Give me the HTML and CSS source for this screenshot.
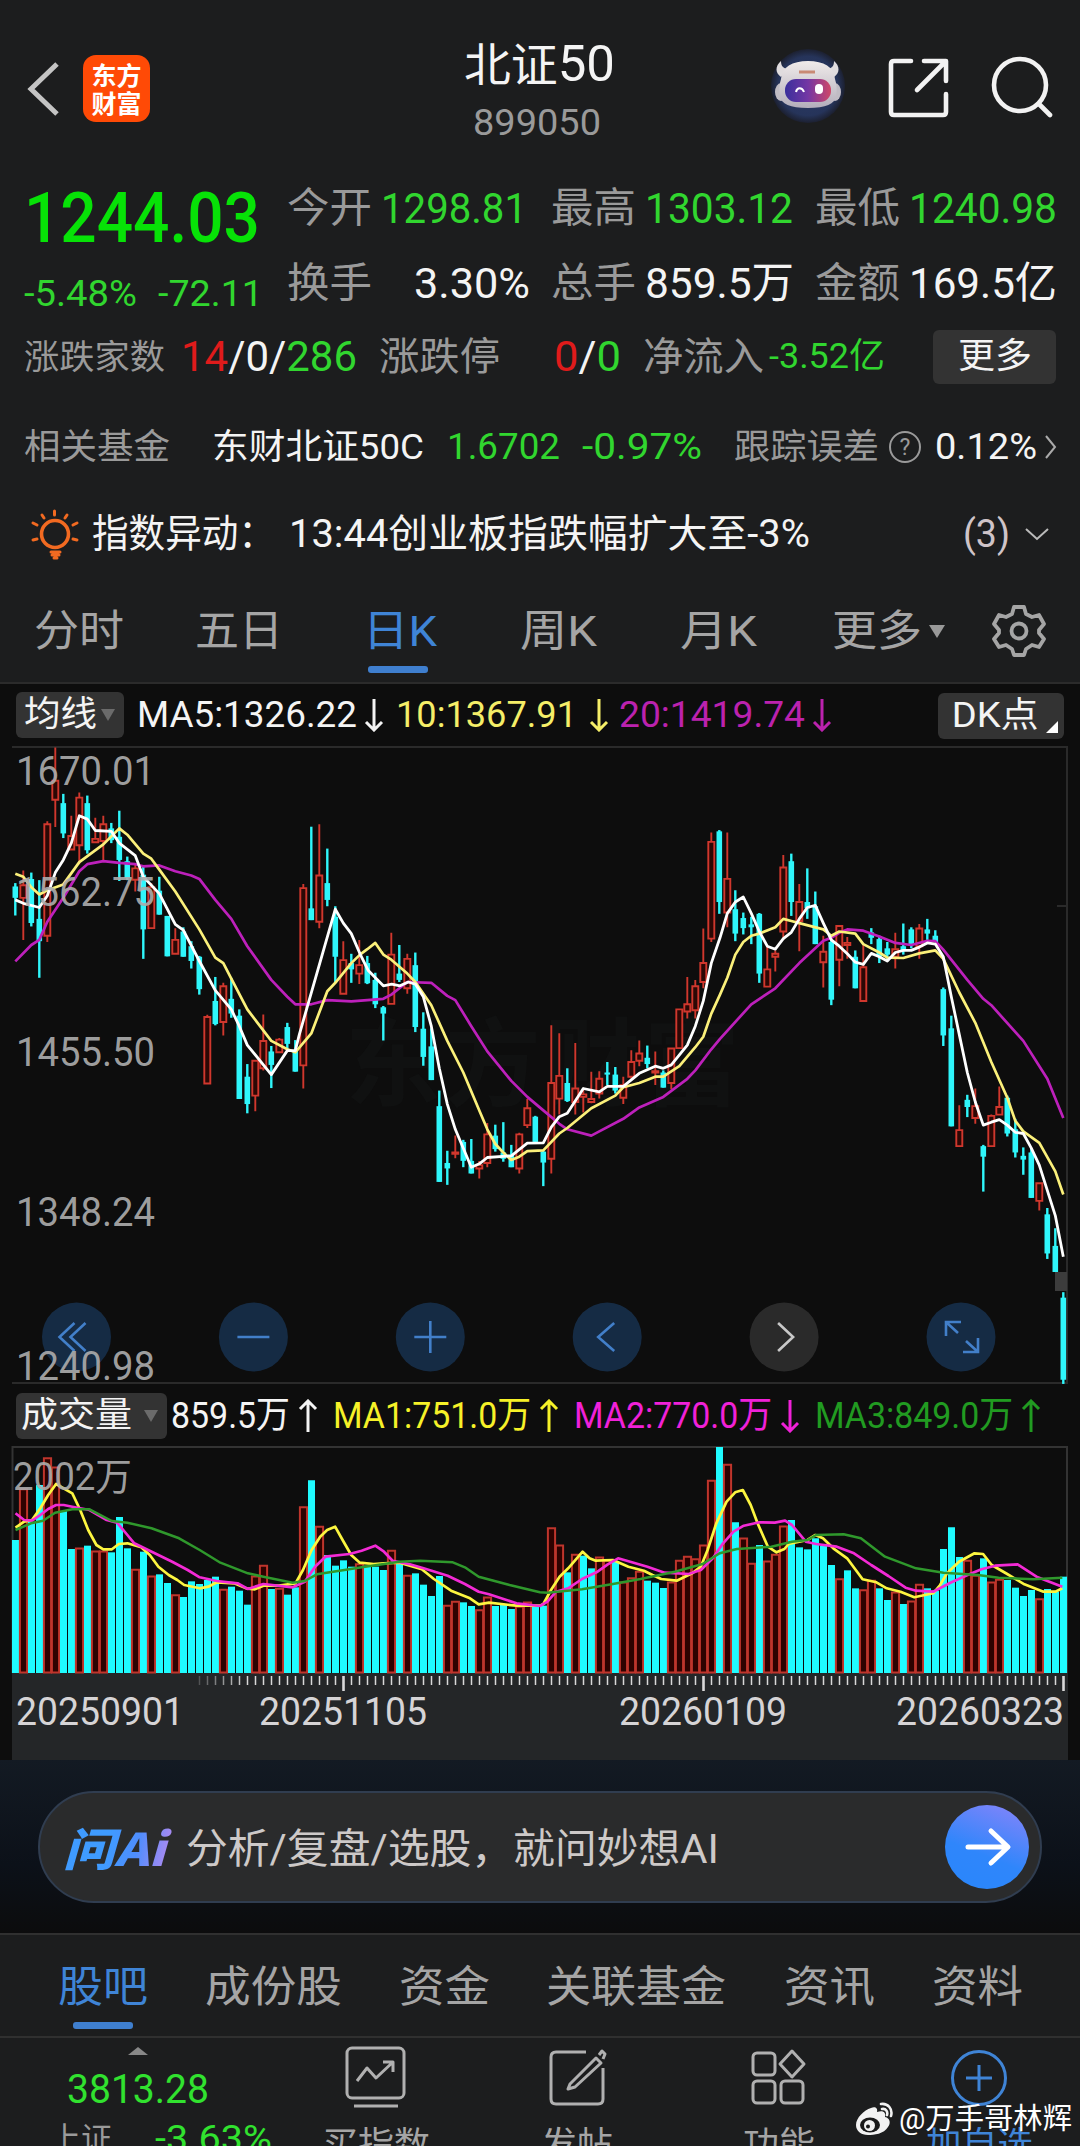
FILE: index.html
```html
<!DOCTYPE html>
<html lang="zh-CN">
<head>
<meta charset="utf-8">
<title>北证50 899050</title>
<link rel="stylesheet" href="styles.css">
</head>
<body>
<header class="top">
  <svg class="back" width="40" height="60" viewBox="0 0 40 60"><path d="M36 6 10 31l26 25"/></svg>
  <div class="brand"><span>东方</span><span>财富</span></div>
  <div class="title"><h1><span data-w="147">北证<i>50</i></span></h1><p><span data-w="124">899050</span></p></div>
  <svg class="robot" width="80" height="84" viewBox="0 0 80 84">
    <defs><linearGradient id="visor"><stop offset="0" stop-color="#3a2f9c"/><stop offset=".5" stop-color="#7437a4"/><stop offset="1" stop-color="#cf4868"/></linearGradient>
    <radialGradient id="halo"><stop offset="0" stop-color="#2b3a66"/><stop offset=".8" stop-color="#26345a"/><stop offset="1" stop-color="#1c2030"/></radialGradient>
    <linearGradient id="shell" x2="0" y2="1"><stop offset="0" stop-color="#f0ebea"/><stop offset="1" stop-color="#b3aebb"/></linearGradient></defs>
    <circle cx="40" cy="41" r="37" fill="url(#halo)"/>
    <path d="M13 16c-6 5-6 12 0 16l6-8c-4-1-6-3-6-8zM66 16c6 5 6 12 0 16l-6-8c4-1 6-3 6-8z" fill="#e0dcde"/>
    <ellipse cx="13" cy="47" rx="6" ry="9" fill="#c0bcc4"/><ellipse cx="67" cy="47" rx="6" ry="9" fill="#c0bcc4"/>
    <path d="M13 34c1-12 11-18 27-18s26 6 27 18c2 6 2 12 1 17-1 8-10 12-28 12s-27-4-28-12c-1-5-1-11 1-17z" fill="url(#shell)"/>
    <rect x="17" y="34" width="46" height="23" rx="11" fill="url(#visor)"/>
    <path d="M28 47c1-5 6-5 8 0" fill="none" stroke="#fff" stroke-width="2"/><rect x="47" y="39" width="8" height="10" rx="4" fill="#fff"/>
    <path d="M31 27h16" stroke="#c98a75" stroke-width="3"/>
  </svg>
  <svg class="line" width="62" height="62" viewBox="0 0 62 62"><path d="M24 5H7q-3 0-3 3v48q0 3 3 3h49q3 0 3-3V38M37 5h22v20M58 6 30 34"/></svg>
  <svg class="line" width="62" height="62" viewBox="0 0 62 62"><circle cx="29" cy="29" r="26"/><path d="m48 48 11 11"/></svg>
</header>

<section class="quote">
  <div class="price">
    <b><span data-w="232">1244.03</span></b>
    <div class="chg"><span data-w="109">-5.48%</span><span data-w="101">-72.11</span></div>
  </div>
  <div class="stats">
    <em data-w="81">今开</em><span class="g" data-w="142">1298.81</span><em data-w="81">最高</em><span class="g" data-w="144">1303.12</span><em data-w="81">最低</em><span class="g" data-w="144">1240.98</span>
    <em data-w="81">换手</em><span class="end" data-w="112">3.30%</span><em data-w="81">总手</em><span data-w="145">859.5万</span><em data-w="81">金额</em><span data-w="144">169.5亿</span>
  </div>
</section>
<section class="breadth">
  <em data-w="137">涨跌家数</em><span class="n" data-w="172"><i class="r">14</i>/0/<i class="g">286</i></span><em class="l" data-w="117">涨跌停</em><span class="n" data-w="63"><i class="r">0</i>/<i class="g">0</i></span><em class="l" data-w="117">净流入</em><span class="g s" data-w="112">-3.52亿</span>
  <button class="more"><span data-w="70">更多</span></button>
</section>
<section class="fund">
  <em data-w="142">相关基金</em><span data-w="208">东财北证50C</span><span class="g" data-w="109">1.6702</span><span class="g" data-w="116">-0.97%</span><em data-w="141">跟踪误差</em>
  <svg width="34" height="34" viewBox="0 0 34 34"><circle cx="17" cy="17" r="15" fill="none" stroke="#9a9a9a" stroke-width="2"/><text x="17" y="25" text-anchor="middle">?</text></svg>
  <span data-w="98">0.12%</span>
  <svg width="14" height="26" viewBox="0 0 14 26"><path d="m1 2 9 11-9 11" fill="none" stroke="#aaa" stroke-width="2"/></svg>
</section>
<section class="alert">
  <svg width="50" height="52" viewBox="0 0 50 52"><g fill="none" stroke="#f26a21" stroke-width="3" stroke-linecap="round"><circle cx="25" cy="26" r="13.5" stroke-width="3.6"/><path d="M24.500 3v4M12 7l2 3M37 7l-2 3M3 15l4 2M47 15l-4 2M3 32l4-1M47 32l-4-1M21 44h9M22 47h7M24 50h3"/></g></svg>
  <span data-w="179">指数异动：</span><span data-w="517">13:44创业板指跌幅扩大至-3%</span><span class="cnt" data-w="43">(3)</span>
  <svg width="26" height="16" viewBox="0 0 26 16"><path d="m1 3 11 10L23 3" fill="none" stroke="#bbb" stroke-width="2"/></svg>
</section>
<nav class="period">
  <span data-w="86">分时</span><span data-w="84">五日</span><span class="on"><span data-w="70">日K</span></span><span data-w="73">周K</span><span data-w="73">月K</span><span data-w="86">更多</span>
  <svg class="tri" width="16" height="13" viewBox="0 0 16 13"><path d="M0 0h16L8 13z" fill="#999"/></svg>
  <svg width="54" height="54" viewBox="0 0 54 54"><g fill="none" stroke="#a5a5a5" stroke-width="3.800" stroke-linejoin="round"><path d="M22 3h10l2 7 6 3 7-2 5 9-5 6v3l5 6-5 8-7-2-6 4-2 6H22l-2-6-6-4-7 2-5-8 5-6v-3l-5-6 5-9 7 2 6-3z"/><circle cx="27" cy="27" r="7.500"/></g></svg>
</nav>

<main class="chart">
  <div class="ma">
    <button><span data-w="69">均线</span><svg width="14" height="12" viewBox="0 0 14 12"><path d="M0 0h14L7 12z" fill="#6b6b6b"/></svg></button>
    <span data-w="216">MA5:1326.22</span><svg class="arr" viewBox="0 0 20 34"><path d="M10 1v31M2 24l8 8 8-8"/></svg>
    <span class="y" data-w="177">10:1367.91</span><svg class="arr y" viewBox="0 0 20 34"><path d="M10 1v31M2 24l8 8 8-8"/></svg>
    <span class="m" data-w="182">20:1419.74</span><svg class="arr m" viewBox="0 0 20 34"><path d="M10 1v31M2 24l8 8 8-8"/></svg>
    <button class="dk"><span data-w="83">DK点</span><svg width="12" height="12" viewBox="0 0 12 12"><path d="M12 0v12H0z" fill="#fff"/></svg></button>
  </div>
  <svg id="kline" width="1080" height="645" viewBox="0 740 1080 645"></svg>
  <div class="ma vol">
    <button><span data-w="107">成交量</span><svg width="14" height="12" viewBox="0 0 14 12"><path d="M0 0h14L7 12z" fill="#6b6b6b"/></svg></button>
    <span data-w="115">859.5万</span><svg class="arr" viewBox="0 0 20 34"><path d="M10 33V2M2 10l8-8 8 8"/></svg>
    <span class="yy" data-w="194">MA1:751.0万</span><svg class="arr yy" viewBox="0 0 20 34"><path d="M10 33V2M2 10l8-8 8 8"/></svg>
    <span class="mm" data-w="194">MA2:770.0万</span><svg class="arr mm" viewBox="0 0 20 34"><path d="M10 1v31M2 24l8 8 8-8"/></svg>
    <span class="gg" data-w="194">MA3:849.0万</span><svg class="arr gg" viewBox="0 0 20 34"><path d="M10 33V2M2 10l8-8 8 8"/></svg>
  </div>
  <svg id="volume" width="1080" height="315" viewBox="0 1445 1080 315"></svg>
</main>

<section class="ai">
  <div class="pill">
    <b><span data-w="98">问Ai</span></b><span data-w="529">分析/复盘/选股，就问妙想AI</span>
    <svg width="84" height="84" viewBox="0 0 84 84"><defs><linearGradient id="go" x1=".7" y1="0" x2=".3" y2="1"><stop offset="0" stop-color="#7c84fa"/><stop offset=".6" stop-color="#2f86fb"/><stop offset="1" stop-color="#2a86fb"/></linearGradient></defs><circle cx="42" cy="42" r="42" fill="url(#go)"/><path d="M23 42h38M46 26l17 16-17 16" fill="none" stroke="#fff" stroke-width="5" stroke-linecap="round" stroke-linejoin="round"/></svg>
  </div>
</section>
<nav class="tabs">
  <span class="on"><span data-w="86">股吧</span></span><span data-w="133">成份股</span><span data-w="87">资金</span><span data-w="176">关联基金</span><span data-w="87">资讯</span><span data-w="87">资料</span>
</nav>
<footer class="bar">
  <div class="index"><svg width="20" height="8" viewBox="0 0 20 8"><path d="m0 8 10-8 10 8z" fill="#888"/></svg><strong><span data-w="138">3813.28</span></strong><p><em data-w="58">上证</em><span data-w="113">-3.63%</span></p></div>
  <div><svg width="62" height="64" viewBox="0 0 62 64"><rect x="2" y="2" width="57" height="50" rx="5"/><path d="m12 35 10-13 9 10 17-16M38 16h10v10M9 60h44"/></svg><span data-w="104">买指数</span></div>
  <div><svg width="62" height="64" viewBox="0 0 62 64"><path d="M40 6H10q-5 0-5 5v42q0 5 5 5h42q5 0 5-5V22M24 38 50 12l5 5-26 24-7 2zM53 9l3-4 3 3-2 5"/></svg><span data-w="68">发帖</span></div>
  <div><svg width="62" height="64" viewBox="0 0 62 64"><rect x="5" y="7" width="22" height="22" rx="4"/><rect x="5" y="35" width="22" height="22" rx="4"/><rect x="33" y="35" width="22" height="22" rx="4"/><path d="m44 5 12 13-12 13-12-13z"/></svg><span data-w="68">功能</span></div>
  <div class="add"><svg width="62" height="64" viewBox="0 0 62 64"><circle cx="31" cy="32" r="26.500"/><path d="M31 19v26M18 32h26"/></svg><span data-w="103">加自选</span></div>
</footer>
<div class="sign">
  <svg width="40" height="34" viewBox="0 0 40 34"><path d="M15 6c4-2 7 0 6 4 6-2 9 0 8 5 5 1 6 6 3 10-4 7-14 8-20 8C5 33 0 29 0 23 0 16 8 8 15 6z" fill="#f2f2f2"/><ellipse cx="14" cy="23" rx="10" ry="7.500" fill="#1a1a1a"/><circle cx="13.500" cy="23.500" r="5.500" fill="#f2f2f2"/><circle cx="12" cy="24.500" r="2" fill="#1a1a1a"/><path d="M25 2c7-1 12 5 10 12M26 7c4-1 6 3 5 6" fill="none" stroke="#f2f2f2" stroke-width="2.600" stroke-linecap="round"/></svg>
  <span data-w="169">@万手哥林辉</span>
</div>
<script src="app.js"></script>
</body>
</html>
```
FILE: styles.css
```css
* { box-sizing: border-box; }
body { margin: 0; width: 1080px; height: 2146px; overflow: hidden; position: relative; background: #1c1d1e; color: #f4f4f4; font-family: Roboto, "Noto Sans CJK SC", sans-serif; line-height: 1; }
h1, p { margin: 0; font-weight: 400; }
i, em { font-style: normal; }
em { color: #9a9a9a; }
button { border: 0; padding: 0; color: inherit; font: inherit; background: #333; border-radius: 6px; display: flex; align-items: center; }
svg { display: block; flex: none; }
[data-w] { display: inline-block; white-space: nowrap; transform-origin: 0 50%; flex: none; }
.g { color: #31d62f; }
.r { color: #e01b1b; }

.top { height: 160px; display: grid; grid-template-columns: 62px 383px 307px 114px 104px 62px; padding-left: 21px; align-items: start; }
.back { margin-top: 58px; }
.back path { fill: none; stroke: #c4c4c4; stroke-width: 5; }
.brand { margin-top: 55px; width: 67px; height: 67px; border-radius: 13px; background: #ff4a06; display: flex; flex-direction: column; align-items: center; justify-content: center; gap: 1px; font: 700 25px/27px "Noto Sans CJK SC", sans-serif; color: #fff; }
.title h1 { margin-top: 39px; font-size: 46px; line-height: 50px; }
.title h1 i { font-size: 50px; }
.title p { margin: 15px 0 0 9px; font-size: 37px; line-height: 36px; color: #9a9a9a; }
.robot { margin: 45px 0 0 -5px; }
.line { margin-top: 56px; fill: none; stroke: #f2f2f2; stroke-width: 4.6; stroke-linecap: round; stroke-linejoin: round; }

.quote { height: 158px; display: flex; padding-left: 26px; }
.price { width: 263px; padding-top: 22px; color: #07e207; }
.price b { display: block; font-size: 70px; line-height: 72px; font-weight: 500; }
.chg { display: flex; gap: 25px; margin-top: 22px; font-size: 36px; line-height: 36px; color: #31d62f; }
.stats { display: grid; grid-template-columns: 94px 170px 94px 170px 94px 150px; grid-template-rows: 75px 74px; line-height: 74px; padding-top: 11px; font-size: 43px; }
.stats em { font-size: 41px; }
.stats .end { margin-left: 33px; }
.breadth { height: 80px; display: grid; grid-template-columns: 157px 198px 175px 89px 126px 162px 123px; padding-left: 26px; align-items: center; font-size: 34px; line-height: 50px; }
.breadth > * { position: relative; top: -1px; }
.breadth .n { font-size: 42px; }
.breadth .l { font-size: 39px; }
.breadth .s { font-size: 35px; }
.more { height: 54px; width: 123px; justify-content: center; font-size: 35px; }
.fund { height: 98px; display: grid; grid-template-columns: 188px 235px 135px 152px 152px 49px 108px 14px; padding-left: 26px; align-items: center; font-size: 37px; line-height: 50px; }
.fund em, .fund span:nth-child(2) { font-size: 35.500px; }
.fund text { font-size: 23px; fill: #9a9a9a; }
.alert { height: 76px; display: grid; grid-template-columns: 64px 197px 674px 60px 26px; padding-left: 30px; align-items: center; font-size: 39px; line-height: 50px; }
.alert .cnt { font-size: 38px; color: #cfc4c8; }
.period { height: 112px; padding: 8px 0 0 36px; border-bottom: 2px solid #2b2b2b; display: grid; grid-template-columns: 161px 168px 157px 160px 152px 95px 63px 54px; align-items: center; font-size: 43px; line-height: 90px; color: #a5a5a5; }
.on { color: #3f84d6; position: relative; }
.on::after { content: ""; position: absolute; left: 3px; bottom: 3px; width: 60px; height: 7px; border-radius: 3px; background: #3f7fcf; }

.chart { height: 1076px; background: #0d0d0d; display: flex; flex-direction: column; }
.ma { height: 56px; padding: 5px 0 0 16px; display: flex; align-items: center; font-size: 37px; line-height: 46px; }
.ma button { width: 108px; height: 46px; padding-left: 10px; gap: 6px; margin-right: 15px; font-size: 35px; }
.ma .arr { width: 20px; height: 34px; margin: 0 14px 0 9px; fill: none; stroke: #f4f4f4; stroke-width: 3; }
.y { color: #f5ee68; } .ma .arr.y { stroke: #f5ee68; margin: 0 12px 0 14px; }
.m { color: #bb22ae; } .ma .arr.m { stroke: #bb22ae; }
.yy { color: #f6f128; } .ma .arr.yy { stroke: #f6f128; }
.mm { color: #f021d8; } .ma .arr.mm { stroke: #f021d8; }
.gg { color: #219b21; } .ma .arr.gg { stroke: #219b21; }
.ma .dk { width: 126px; margin: 2px 16px 0 auto; padding-left: 14px; gap: 11px; }
.dk svg { align-self: flex-end; margin-bottom: 6px; }
.vol { height: 60px; padding-top: 2px; }
.vol button { width: 151px; padding-left: 6px; gap: 15px; margin-right: 6px; }
.vol .arr { margin: 0 17px 0 10px; }

.ai { height: 173px; padding: 31px 38px 0; background: linear-gradient(#131a23, #0c1119 60%, #0c0c0d); }
.pill { height: 112px; border: 2px solid #303d50; border-radius: 56px; background: #2a2b2c; display: flex; align-items: center; padding: 0 11px 0 25px; font-size: 41px; line-height: 56px; color: #cdc9c8; }
.pill > span { position: relative; top: 2px; }
.pill b { width: 123px; font: italic 900 45px/56px "Noto Sans CJK SC", sans-serif; }
.pill b span { background: linear-gradient(100deg, #3f9bff 40%, #4f8dfd 65%, #b78af0 95%); -webkit-background-clip: text; background-clip: text; color: transparent; }
.pill svg { margin-left: auto; }
.tabs { height: 105px; border-top: 2px solid #303030; border-bottom: 2px solid #303030; display: grid; grid-template-columns: 147px 194px 147px 238px 148px 100px; padding: 2px 0 0 60px; align-items: center; font-size: 43px; line-height: 92px; color: #a5a5a5; }
.tabs .on::after { left: 13px; bottom: 4px; }
.bar { height: 108px; display: grid; grid-template-columns: 276px 200px 202px 202px 198px; color: #a5a5a5; font-size: 35px; }
.bar div { display: flex; flex-direction: column; align-items: center; padding-top: 8px; gap: 18px; }
.bar div > svg { fill: none; stroke: #b0b0b0; stroke-width: 3; stroke-linejoin: round; }
.bar .add { color: #3f84d6; }
.bar .add svg { stroke: #3f84d6; }
.bar .index { padding-top: 9px; gap: 0; color: #31e22f; }
.bar .index svg { stroke: none; }
.index strong { font-weight: 400; font-size: 40px; line-height: 50px; margin-top: 10px; }
.index p { display: flex; gap: 47px; margin-left: 52px; align-self: flex-start; font-size: 37px; line-height: 50px; margin-top: -1px; }
.index em { font-size: 32px; }
.sign { position: absolute; left: 856px; top: 2102px; display: flex; gap: 5px; align-items: center; font-size: 29px; line-height: 34px; color: #fff; }
```
FILE: app.js
```js
// Squeeze each label to its column width, measured once fonts are laid out.
// The side bearings of the first and last glyph fall outside the column.
const BEARING = 2;
document.querySelectorAll('[data-w]').forEach(el => {
  const w = +el.dataset.w;
  const r = document.createRange();
  r.selectNodeContents(el);
  const n = r.getBoundingClientRect().width;
  el.style.width = w + 'px';
  el.style.transform = `translateX(${-BEARING}px) scaleX(${((w + 2 * BEARING) / n).toFixed(4)})`;
});

const RED = '#d0372d', CYAN = '#2ff6fb', X0 = 15.3, STEP = 8;
const line = (pts, map, color, w) => '<polyline fill="none" stroke="' + color + '" stroke-width="' + w + '" stroke-linejoin="round" points="' +
  pts.trim().split(/\s+/).map(p => map(...p.split(',').map(Number)).map(v => v.toFixed(1)).join(',')).join(' ') + '"/>';
const label = (s, x, y, w, size, color) => `<text x="${x}" y="${y}" font-size="${size}" fill="${color}" textLength="${w}" lengthAdjust="spacingAndGlyphs">${s}</text>`;

// Candles: colour, high, body top, body bottom, low
const candles = `c340,348,375,417 r310,345,375,475 c315,330,435,443 c333,425,478,565 r193,200,465,480 r18,97,142,207 c128,150,222,233 r180,228,260,262 r125,137,250,295 c132,150,262,270 r185,235,243,245 r180,200,240,285 c197,210,238,245 c168,230,285,335 c277,288,328,333 r293,305,332,360 c300,320,450,520 r340,350,447,447 c325,358,415,415 c418,418,514,514 r447,475,508,508 c445,455,515,515 c478,490,525,543 c513,515,592,605 r653,658,816,816 c563,620,675,678 r577,585,670,702 c565,615,650,660 c640,655,853,853 c770,800,865,887 r760,762,845,882 r652,715,780,785 c727,740,772,827 r708,712,742,742 c672,682,722,735 c713,738,788,788 r342,352,773,828 c206,400,428,428 r200,322,432,447 c258,340,380,395 c395,420,515,575 r478,523,603,603 c508,530,545,577 r475,535,555,580 c513,530,578,580 c553,570,628,637 c632,635,650,714 r458,510,627,627 c487,555,570,575 r508,520,590,603 c505,535,682,694 c647,686,753,774 c685,728,808,808 c833,870,1050,1050 c976,1005,1018,1057 r940,980,983,994 c950,955,1000,1015 c948,1000,1030,1030 r1000,1010,1018,1042 r910,937,1005,1015 c914,940,972,978 c908,980,995,1002 c962,985,1015,1015 r933,937,1018,1030 r853,875,915,922 c893,895,955,955 c975,978,1004,1060 r678,815,995,1030 r697,798,852,890 c780,815,858,860 r720,828,860,890 r830,842,848,885 r788,853,860,863 r787,805,840,852 c765,790,795,820 c777,795,833,840 r800,820,850,865 r737,765,800,805 r714,745,762,775 c726,755,770,780 r740,787,790,820 c785,790,826,826 r732,733,815,830 r638,640,732,732 r563,628,645,662 r570,585,642,662 r448,530,575,590 r220,242,472,480 c214,217,385,413 r220,330,410,445 c357,402,460,478 c410,423,447,462 c420,438,445,485 c411,413,555,577 r490,545,586,586 r500,508,515,550 r273,303,455,475 c270,288,385,418 r342,385,430,502 c305,385,400,425 c360,395,485,485 r465,503,528,588 c475,480,617,630 r440,442,522,585 r468,482,487,520 c500,515,590,590 r487,540,620,620 c447,457,470,485 c465,473,515,530 c480,495,510,522 r458,497,515,543 c436,490,500,510 c445,450,487,495 r437,448,490,520 c425,450,460,475 c452,465,480,480 c588,592,702,727 c655,685,918,918 r868,927,965,965 c843,855,872,896 r828,870,898,912 c962,965,990,1073 r890,893,965,965 r823,872,890,890 c845,850,935,942 c900,925,980,992 c968,988,997,1033 c970,980,1088,1088 r1052,1053,1095,1118 c1112,1127,1220,1233 c1160,1202,1264,1264 c1312,1325,1520,1530`.split(' ');
const ky = v => 740 + v / 2.376;
let k = '<g font-family="Noto Sans CJK SC" font-size="96" font-weight="700" fill="#101111"><text x="345" y="1098" textLength="395">东方财富</text></g>';
k += '<path d="M12 747H1067V1383H12M1057 906h10" fill="none" stroke="#2a2a2a" stroke-width="2"/>';
k += '<path d="M1055 1272h12v19h-12z" fill="#3c3c3c"/>';
candles.forEach((s, i) => {
  const x = X0 + i * STEP, [h, t, b, l] = s.slice(1).split(',').map(v => ky(+v));
  if (s[0] === 'c') k += `<path d="M${x} ${h}V${l}" stroke="${CYAN}" stroke-width="2.400"/><path d="M${x - 2.8} ${t}h5.600V${b}h-5.600z" fill="${CYAN}"/>`;
  else k += `<path d="M${x} ${h}V${t}M${x} ${b}V${l}M${x - 3} ${t}h6V${b}h-6z" fill="#2c0805" stroke="${RED}" stroke-width="1.900"/>`;
});
const km = (x, y) => [x / 3, ky(y)];
k += line('46,526 94,487 118,475 142,432 190,375 238,312 262,295 310,288 358,292 406,295 430,300 478,298 526,312 574,322 598,330 646,380 694,425 742,490 814,570 862,610 886,628 934,628 982,618 1054,621 1150,615 1174,605 1222,575 1294,577 1342,608 1366,618 1414,680 1462,740 1534,810 1582,848 1630,880 1678,912 1702,925 1774,940 1798,930 1870,900 1918,873 1990,848 2062,805 2086,785 2134,735 2160,710 2254,628 2326,590 2398,530 2470,477 2494,470 2518,458 2542,450 2590,453 2638,467 2686,482 2734,487 2782,477 2806,478 2830,498 2902,570 2950,615 2974,630 3070,715 3142,805 3190,898', km, '#bd20bb', 2.7);
k += line('46,318 70,325 94,350 118,367 142,357 190,343 238,290 310,248 358,210 382,225 430,270 454,282 478,308 526,360 598,450 646,517 670,530 694,567 742,640 814,715 862,735 886,742 934,697 982,597 1006,577 1054,530 1080,510 1102,497 1126,482 1150,510 1174,522 1222,555 1246,575 1294,630 1342,715 1390,790 1438,880 1462,925 1486,960 1510,980 1534,998 1558,990 1582,977 1630,975 1678,935 1702,922 1774,875 1846,845 1870,825 1918,815 1966,800 1990,800 2038,775 2086,730 2110,705 2134,650 2160,605 2182,565 2206,510 2230,480 2254,465 2278,460 2326,445 2350,425 2374,430 2398,435 2470,450 2494,465 2518,455 2566,460 2590,485 2638,505 2662,517 2710,518 2758,507 2806,500 2830,520 2878,600 2926,672 2974,765 3022,850 3046,905 3070,930 3118,957 3166,1025 3190,1080', km, '#fbf07a', 2.7);
k += line('46,380 70,388 118,398 142,370 166,315 190,285 214,245 238,180 262,188 286,215 334,217 358,245 406,275 430,325 478,365 526,438 550,452 598,525 646,595 694,640 718,680 742,725 814,795 862,738 886,738 898,700 1006,402 1030,435 1054,460 1080,508 1105,548 1150,584 1175,580 1200,584 1225,575 1246,580 1270,610 1294,680 1318,780 1342,865 1366,925 1414,1015 1438,1007 1462,992 1534,988 1582,958 1630,957 1654,920 1678,895 1702,887 1750,828 1798,836 1822,823 1870,823 1918,792 1966,775 1990,780 2014,772 2062,725 2086,680 2110,620 2134,530 2160,470 2182,412 2206,385 2230,373 2254,412 2278,455 2302,490 2326,497 2350,472 2374,457 2398,425 2422,398 2446,393 2470,435 2494,475 2518,490 2542,508 2566,528 2590,533 2614,507 2638,515 2662,525 2686,505 2710,500 2734,500 2758,492 2782,482 2806,485 2830,515 2854,610 2878,700 2902,790 2926,860 2950,915 2974,908 2998,902 3022,915 3046,932 3070,935 3094,970 3118,1010 3142,1070 3166,1130 3190,1228', km, '#ffffff', 2.8);
[['1670.01', 785], ['1562.75', 906], ['1455.50', 1066], ['1348.24', 1225.5]].forEach(a => { k += label(a[0], 16, a[1], 139, 40, 'rgba(172,172,172,.92)'); });
['M9-14-6 0 9 14M-2-14-17 0-2 14', 'M-16 0H16', 'M-16 0H16M0-16V16', 'M7-14-9 0 7 14', 'M-6-14 9 0-6 14', 'M-15-1V-15H0M-15-15-3-4M17 1V15H2M17 15 5 4'].forEach((d, i) => {
  const grey = i === 4;
  k += `<g transform="translate(${76.500 + i * 176.900} 1337)"><circle r="34.500" fill="${grey ? '#2c2c2c' : '#162d48'}" fill-opacity=".95"/><path d="${d}" fill="none" stroke="${grey ? '#c8c8c8' : '#427fc9'}" stroke-width="2.600"/></g>`;
});
k += label('1240.98', 16, 1380, 139, 40, 'rgba(172,172,172,.92)');
document.getElementById('kline').innerHTML = k;

// Volume bars: colour and top edge
const vols = 'c480 r325 c425 c315 r232 r260 c393 c507 r503 c497 r512 r512 c517 c411 c505 r567 c515 r587 c583 c609 r643 c651 c604 c612 c600 c590 r627 c620 c632 c674 r587 r555 c627 r624 c644 c622 r379 c301 r438 c525 c557 c541 c560 r550 c557 c560 c570 r510 c550 r585 c580 c614 c648 c588 r675 r663 c667 c678 r688 r650 c678 c675 c687 r678 r665 c680 c677 r442 r494 c577 r522 c527 c565 r530 r540 c545 r605 r592 r573 c602 c608 c624 r605 r540 r528 r535 r494 r300 c201 r252 c427 r473 r549 c495 r542 r522 r437 c420 c502 c508 c475 c497 c555 r595 c571 c625 r628 r600 c625 c660 r635 c672 r662 r612 c625 c632 c507 c442 c531 r540 r585 c535 r605 r597 c600 c623 c648 c630 r655 c627 c635 c590'.split(' ');
const vm = (x, y) => [x / 2.904, 1380 + y / 3];
const major = i => i === 41 || i === 86 || i === 131;
let v = '<path d="M12 1673H1068V1760H12z" fill="#242628"/><path d="M12.500 1673V1447H1067V1673" fill="none" stroke="#333" stroke-width="2"/>';
vols.forEach((s, i) => {
  const x = X0 + i * STEP + .2, y = 1380 + s.slice(1) / 3;
  v += s[0] === 'c' ? `<path d="M${x - 3.500} ${y}h7V1673h-7z" fill="#1ffbff"/>` : `<path d="M${x - 3.600} ${y + .8}h7.200V1672.500h-7.200z" fill="#2e0200" stroke="#bf352c" stroke-width="2"/>`;
  if (i > 22) v += `<path d="M${x} 1676V${major(i) ? 1691 : 1685}" stroke="#d8d8d8" stroke-opacity="${Math.min(1, (i - 21) / 8)}" stroke-width="${major(i) ? 2.6 : 1.5}"/>`;
});
v += line('45,443 70,425 93,420 117,385 140,345 163,312 210,340 233,390 256,450 280,495 300,508 325,508 345,492 370,490 410,502 435,525 460,560 490,585 515,600 535,615 580,625 605,620 630,607 680,610 715,625 740,628 765,617 810,617 858,610 880,570 905,510 930,470 950,450 973,440 995,480 1020,525 1045,548 1085,552 1115,550 1160,548 1200,560 1225,568 1260,597 1310,632 1365,655 1390,673 1420,668 1500,677 1568,677 1578,672 1600,630 1625,590 1650,565 1692,515 1712,535 1730,542 1780,540 1825,560 1870,572 1895,585 1920,597 1965,602 2010,580 2035,560 2055,510 2080,430 2110,365 2135,337 2157,330 2180,375 2200,430 2230,500 2255,517 2278,507 2290,492 2345,480 2368,465 2390,475 2420,505 2460,535 2505,598 2545,607 2575,625 2615,635 2655,652 2710,640 2730,615 2750,580 2785,545 2830,520 2855,522 2880,555 2925,582 2975,613 3030,635 3065,635 3085,625', vm, '#fcf540', 2.7);
v += line('45,400 70,420 93,422 117,405 140,387 163,375 185,375 210,380 260,390 285,405 310,420 340,428 370,465 390,490 430,510 500,545 545,570 580,592 630,603 690,610 720,627 765,612 850,622 885,605 915,560 945,530 1015,522 1050,512 1090,497 1115,515 1140,542 1190,553 1230,565 1300,587 1350,612 1390,635 1420,643 1500,670 1568,678 1590,665 1615,635 1650,625 1690,597 1735,575 1765,553 1795,535 1830,545 1880,560 1930,578 2000,582 2035,570 2070,535 2100,490 2130,455 2160,437 2205,427 2250,428 2280,422 2300,435 2340,485 2370,492 2430,500 2480,520 2530,555 2580,588 2630,623 2660,632 2710,635 2760,608 2810,585 2850,568 2890,557 2955,553 3010,590 3085,620', vm, '#f32ad5', 2.7);
v += line('45,450 90,430 125,422 160,398 210,388 260,388 325,423 370,428 440,445 520,475 580,510 640,548 720,580 765,590 850,608 885,603 920,583 1000,570 1060,560 1160,545 1220,542 1315,547 1350,562 1390,590 1480,615 1568,637 1590,638 1690,628 1780,612 1860,597 1960,575 2040,552 2090,520 2140,507 2240,500 2300,485 2345,480 2370,465 2450,463 2500,475 2570,530 2660,565 2740,578 2840,585 2900,593 3000,598 3085,593', vm, '#2f982c', 2.5);
v += label('2002万', 13, 1490, 119, 38, 'rgba(172,172,172,.92)');
[['20250901', 16], ['20251105', 259], ['20260109', 619], ['20260323', 896]].forEach(a => { v += label(a[0], a[1], 1724.500, 168, 38, '#d6d4d6'); });
document.getElementById('volume').innerHTML = v;
```
